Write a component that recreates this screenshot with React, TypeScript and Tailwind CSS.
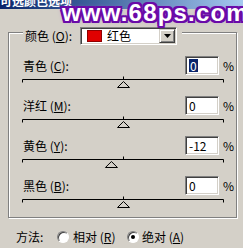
import React from "react";

type Channel = { name: string; key: string; value: number; selected?: boolean };

const channels: Channel[] = [
  { name: "青色", key: "C", value: 0, selected: true },
  { name: "洋红", key: "M", value: 0 },
  { name: "黄色", key: "Y", value: -12 },
  { name: "黑色", key: "B", value: 0 },
];

const sunken =
  "border border-t-[#808080] border-l-[#808080] border-r-white border-b-white shadow-[inset_1px_1px_0_#404040,inset_-1px_-1px_0_#d4d0c8]";

function Slider({ value }: { value: number }) {
  const cx = 101.5 + (value / 100) * 100.5;
  return (
    <svg width="203" height="14" className="ml-[13px] block">
      <path
        d="M0.5 7.5V4.5H201.5V7.5M101.5 4.5V1.5"
        fill="none"
        stroke="#000"
        strokeWidth="1"
      />
      <polygon
        points={`${cx},6.5 ${cx - 6},12.5 ${cx + 6},12.5`}
        fill="#d4d0c8"
        stroke="#000"
        strokeWidth="1"
      />
    </svg>
  );
}

function Radio({ checked }: { checked?: boolean }) {
  return (
    <span className="w-[12px] h-[12px] rounded-full bg-white flex items-center justify-center border border-t-[#808080] border-l-[#808080] border-r-white border-b-white shadow-[inset_1px_1px_0_#404040]">
      {checked && <span className="w-[4px] h-[4px] rounded-full bg-black" />}
    </span>
  );
}

export default function App() {
  return (
    <div className="w-[243px] h-[248px] bg-[#d4d0c8] overflow-hidden relative font-['SimSun','Noto_Sans_CJK_SC',sans-serif] text-[12px] leading-none text-black">
      {/* title bar, cut off at the top */}
      <div className="h-[9px] bg-gradient-to-r from-[#0a246a] to-[#a6caf0] overflow-hidden">
        <div className="-mt-[5px] text-white font-bold text-[12px] leading-[12px]">
          可选颜色选项
        </div>
      </div>

      {/* watermark */}
      <div className="absolute left-[62px] top-[1px] font-['Liberation_Sans',sans-serif] font-bold text-[24px] leading-none tracking-[1.2px] text-white [text-shadow:2px_0_0_#6a0aa8,-2px_0_0_#6a0aa8,0_2px_0_#6a0aa8,0_-2px_0_#6a0aa8,2px_2px_0_#6a0aa8,-2px_-2px_0_#6a0aa8,2px_-2px_0_#6a0aa8,-2px_2px_0_#6a0aa8,0_0_5px_#b080d8]">
        www.68ps.com
      </div>

      {/* group box */}
      <div className="ml-2 mt-[23px] w-[229px] h-[186px] border border-[#808080] shadow-[1px_1px_0_#fff,inset_1px_1px_0_#fff]">
        <div className="-mt-[6px] ml-[14px] w-fit flex items-center bg-[#d4d0c8] pl-[2px] pr-[5px]">
          <span className="w-[55px]">
            颜色 (<span className="underline">O</span>):
          </span>
          <div className={`w-[97px] h-[18px] bg-white flex items-center ${sunken}`}>
            <span className="ml-[6px] w-[15px] h-[12px] bg-[#e00000] border border-[#900000]" />
            <span className="ml-[5px]">红色</span>
            <span className="ml-auto mr-[1px] w-[16px] h-[14px] bg-[#d4d0c8] flex items-center justify-center border border-t-[#d4d0c8] border-l-[#d4d0c8] border-r-[#404040] border-b-[#404040] shadow-[inset_1px_1px_0_#fff,inset_-1px_-1px_0_#808080]">
              <svg width="7" height="4">
                <polygon points="0,0 7,0 3.5,4" fill="#000" />
              </svg>
            </span>
          </div>
        </div>

        <div className="mt-[11px] flex flex-col gap-[7px]">
          {channels.map((c) => (
            <div key={c.key} className="flex flex-col">
              <div className="flex items-center h-[19px]">
                <span className="ml-[14px] w-[162px]">
                  {c.name} (<span className="underline">{c.key}</span>):
                </span>
                <div className={`w-[34px] h-[19px] bg-white flex items-center pl-[3px] ${sunken}`}>
                  {c.selected ? (
                    <span className="bg-[#0a246a] text-white px-[1px] leading-[13px]">{c.value}</span>
                  ) : (
                    <span>{c.value}</span>
                  )}
                </div>
                <span className="ml-[4px]">%</span>
              </div>
              <Slider value={c.value} />
            </div>
          ))}
        </div>
      </div>

      {/* method */}
      <div className="mt-[12px] ml-4 flex items-center h-[14px]">
        <span className="w-[41px]">方法:</span>
        <Radio />
        <span className="ml-[4px] w-[54px]">
          相对 (<span className="underline">R</span>)
        </span>
        <Radio checked />
        <span className="ml-[3px]">
          绝对 (<span className="underline">A</span>)
        </span>
      </div>
    </div>
  );
}
